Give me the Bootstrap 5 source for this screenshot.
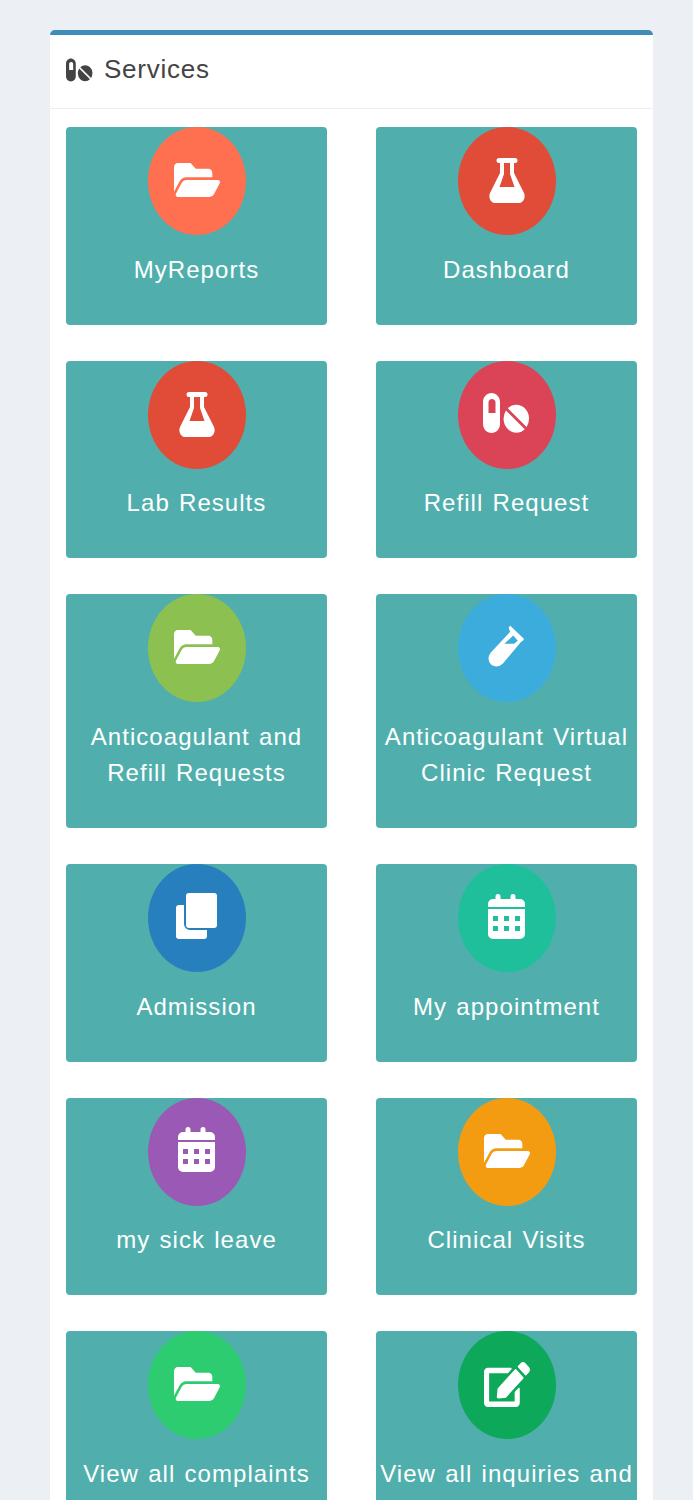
<!DOCTYPE html>
<html lang="en">
<head>
<meta charset="utf-8">
<title>Services</title>
<link rel="stylesheet" href="https://cdn.jsdelivr.net/npm/bootstrap@5.3.0/dist/css/bootstrap.min.css">
<style>
html,body{height:1500px;overflow:hidden}
body{background:#ecf0f5;font-family:"Liberation Sans",Arial,sans-serif;padding:30px 40px 0 50px}
.svc-card{border:0;border-top:5px solid #3f8cb8;border-radius:5px;background:#fff;box-shadow:0 1px 1px rgba(0,0,0,.05)}
.svc-head{background:#fff;border-bottom:1px solid #eceeef;padding:0 16px 4px;height:74px;color:#444;font-size:26px;letter-spacing:.75px;gap:11px}
.svc-head svg{width:27px;height:24px;fill:#444}
.svc-body{padding:18px 16px 0}
.svc-grid{--bs-gutter-x:49px;--bs-gutter-y:36px}
.svc-tile{background:#50afad;border-radius:4px;color:#fff;text-align:center;padding-bottom:37px;height:100%}
.svc-circle{width:98px;height:108px;border-radius:50%;margin:0 auto 16.7px}
.svc-circle svg{fill:#fff;fill-rule:evenodd}
.ic-folder{width:46px;height:34px;margin-bottom:2px}
.ic-flask{width:36px;height:45px;margin-bottom:1px}
.ic-pills{width:47px;height:40px;margin-bottom:4px}
.ic-vial{width:36px;height:42px;margin-bottom:4px;margin-right:2px}
.ic-copy{width:41px;height:46px;margin-bottom:4px}
.ic-cal{width:37px;height:45px;margin-bottom:4px}
.ic-edit{width:46px;height:45px;margin-bottom:1px}
.svc-label{font-size:24px;line-height:36px;letter-spacing:1.05px;word-spacing:1.5px;padding:0 2px}
.c-coral{background:#ff7050}.c-red{background:#e04c38}.c-rose{background:#db4457}.c-lime{background:#8cc152}
.c-sky{background:#3cacdc}.c-blue{background:#2780bd}.c-teal{background:#1fbf9c}.c-purple{background:#9b59b6}
.c-orange{background:#f39c12}.c-green{background:#2ecc71}.c-forest{background:#0ea85a}
</style>
</head>
<body>
<svg width="0" height="0" class="position-absolute">
<symbol id="i-folder" viewBox="0 64 576 384" preserveAspectRatio="none"><path d="M572.694 292.093L500.27 416.248A63.997 63.997 0 0 1 444.989 448H45.025c-18.523 0-30.064-20.093-20.731-36.093l72.424-124.155A64 64 0 0 1 152 256h399.964c18.523 0 30.064 20.093 20.73 36.093zM152 224h328v-48c0-26.51-21.49-48-48-48H272l-64-64H48C21.49 64 0 85.49 0 112v278.046l69.077-118.418C86.214 242.25 118.112 224 152 224z"/></symbol>
<symbol id="i-flask" viewBox="0 0 36 45"><path fill-rule="evenodd" d="M10 0H26a2.5 2.5 0 0 1 0 5h-1V15L35 35C37 40 34 45 30 45H6C2 45-1 40 1 35L11 15V5h-1a2.5 2.5 0 0 1 0-5zM15 5V16L10.5 29H25.5L21 16V5z"/></symbol>
<symbol id="i-pills" viewBox="0 0 47 40"><path fill-rule="evenodd" d="M8.5 0C13.2 0 17 4 17 9V31C17 36 13.2 40 8.5 40S0 36 0 31V9C0 4 3.8 0 8.5 0zM9 6C7 6 5.5 7.5 5.5 9.500V20H12.500V9.500C12.500 7.500 11 6 9 6z"/><path d="M23.04 17.44A12.7 14 0 0 0 41.75 36.15Z"/><path d="M24.85 15.25A12.7 14 0 0 1 43.56 33.96Z"/></symbol>
<symbol id="i-vial" viewBox="30 18 110 127" preserveAspectRatio="none"><path fill-rule="evenodd" d="M98 20L138 58Q141 62 137 65L130 70L75 135Q58 150 40 138Q24 122 38 102L98 38L94 30Q92 24 98 20ZM80 75L107 50L121 66L110 75Z"/></symbol>
<symbol id="i-copy" viewBox="0 0 41 46"><path d="M8 12H3a3 3 0 0 0-3 3V43a3 3 0 0 0 3 3H28a3 3 0 0 0 3-3V37H14a6 6 0 0 1-6-6Z"/><path d="M13 0H38a3 3 0 0 1 3 3V32a3 3 0 0 1-3 3H13a3 3 0 0 1-3-3V3a3 3 0 0 1 3-3Z"/></symbol>
<symbol id="i-cal" viewBox="0 0 37 45"><path d="M10 0a2.500 2.500 0 0 1 2.500 2.500V5H22.500V2.500a2.500 2.500 0 0 1 5 0V5H32a5 5 0 0 1 5 5V13H0V10a5 5 0 0 1 5-5H7.500V2.500A2.500 2.500 0 0 1 10 0z"/><path fill-rule="evenodd" d="M0 15H37V40a5 5 0 0 1-5 5H5a5 5 0 0 1-5-5ZM5 22h5v5H5zM16 22h5v5H16zM27 22h5v5H27zM5 32h5v5H5zM16 32h5v5H16zM27 32h5v5H27z"/></symbol>
<symbol id="i-edit" viewBox="0 0 576 512" preserveAspectRatio="none"><path d="M402.6 83.2l90.2 90.2c3.8 3.8 3.8 10 0 13.8L274.4 405.6l-92.8 10.3c-12.4 1.4-22.9-9.1-21.5-21.5l10.3-92.8L388.8 83.2c3.8-3.8 10-3.8 13.8 0zm162-22.9l-48.8-48.8c-15.2-15.2-39.9-15.2-55.2 0l-35.4 35.4c-3.8 3.8-3.8 10 0 13.8l90.2 90.2c3.8 3.8 10 3.8 13.8 0l35.4-35.4c15.2-15.3 15.2-40 0-55.2zM384 346.2V448H64V128h229.8c3.2 0 6.2-1.3 8.5-3.5l40-40c7.6-7.6 2.2-20.5-8.5-20.5H48C21.5 64 0 85.5 0 112v352c0 26.5 21.5 48 48 48h352c26.5 0 48-21.5 48-48V306.2c0-10.7-12.9-16-20.5-8.5l-40 40c-2.2 2.3-3.5 5.3-3.5 8.5z"/></symbol>
</svg>
<div class="card svc-card">
  <div class="card-header svc-head d-flex align-items-center"><svg><use href="#i-pills"/></svg><span>Services</span></div>
  <div class="card-body svc-body">
    <div class="row svc-grid">
      <div class="col-6"><div class="svc-tile"><div class="svc-circle c-coral d-flex align-items-center justify-content-center"><svg class="ic-folder"><use href="#i-folder"/></svg></div><div class="svc-label">MyReports</div></div></div>
      <div class="col-6"><div class="svc-tile"><div class="svc-circle c-red d-flex align-items-center justify-content-center"><svg class="ic-flask"><use href="#i-flask"/></svg></div><div class="svc-label">Dashboard</div></div></div>
      <div class="col-6"><div class="svc-tile"><div class="svc-circle c-red d-flex align-items-center justify-content-center"><svg class="ic-flask"><use href="#i-flask"/></svg></div><div class="svc-label">Lab Results</div></div></div>
      <div class="col-6"><div class="svc-tile"><div class="svc-circle c-rose d-flex align-items-center justify-content-center"><svg class="ic-pills"><use href="#i-pills"/></svg></div><div class="svc-label">Refill Request</div></div></div>
      <div class="col-6"><div class="svc-tile"><div class="svc-circle c-lime d-flex align-items-center justify-content-center"><svg class="ic-folder"><use href="#i-folder"/></svg></div><div class="svc-label">Anticoagulant and Refill Requests</div></div></div>
      <div class="col-6"><div class="svc-tile"><div class="svc-circle c-sky d-flex align-items-center justify-content-center"><svg class="ic-vial"><use href="#i-vial"/></svg></div><div class="svc-label">Anticoagulant Virtual Clinic Request</div></div></div>
      <div class="col-6"><div class="svc-tile"><div class="svc-circle c-blue d-flex align-items-center justify-content-center"><svg class="ic-copy"><use href="#i-copy"/></svg></div><div class="svc-label">Admission</div></div></div>
      <div class="col-6"><div class="svc-tile"><div class="svc-circle c-teal d-flex align-items-center justify-content-center"><svg class="ic-cal"><use href="#i-cal"/></svg></div><div class="svc-label">My appointment</div></div></div>
      <div class="col-6"><div class="svc-tile"><div class="svc-circle c-purple d-flex align-items-center justify-content-center"><svg class="ic-cal"><use href="#i-cal"/></svg></div><div class="svc-label">my sick leave</div></div></div>
      <div class="col-6"><div class="svc-tile"><div class="svc-circle c-orange d-flex align-items-center justify-content-center"><svg class="ic-folder"><use href="#i-folder"/></svg></div><div class="svc-label">Clinical Visits</div></div></div>
      <div class="col-6"><div class="svc-tile"><div class="svc-circle c-green d-flex align-items-center justify-content-center"><svg class="ic-folder"><use href="#i-folder"/></svg></div><div class="svc-label">View all complaints</div></div></div>
      <div class="col-6"><div class="svc-tile"><div class="svc-circle c-forest d-flex align-items-center justify-content-center"><svg class="ic-edit"><use href="#i-edit"/></svg></div><div class="svc-label">View all inquiries and</div></div></div>
    </div>
  </div>
</div>
</body>
</html>
